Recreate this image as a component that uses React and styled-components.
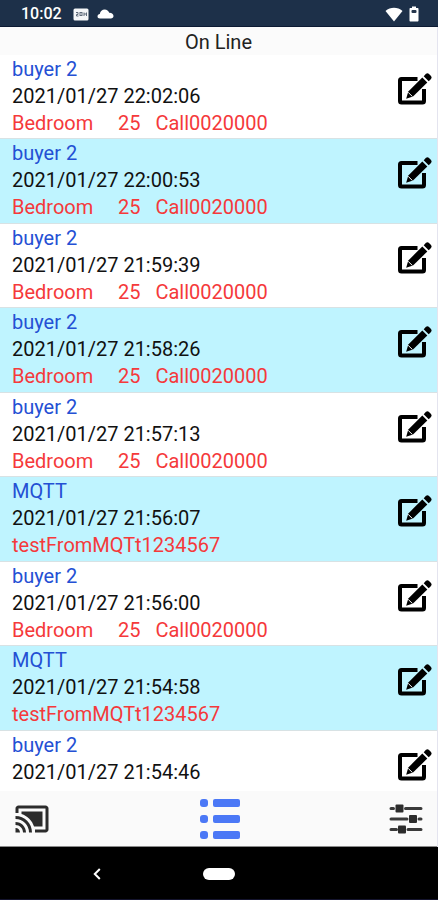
import React, { useState } from 'react'
import styled, { createGlobalStyle } from 'styled-components'
import { MdCastConnected } from 'react-icons/md'


const GlobalStyle = createGlobalStyle`
  * {
    box-sizing: border-box;
  }
  body {
    margin: 0;
    background: #fff;
    font-family: Roboto, 'Noto Sans', sans-serif;
  }
  button {
    display: flex;
    align-items: center;
    justify-content: center;
    padding: 0;
    border: none;
    background: none;
    color: inherit;
    cursor: pointer;
  }
  svg {
    display: block;
  }
`

const Screen = styled.div`
  display: flex;
  flex-direction: column;
  width: 100%;
  height: 100vh;
`

const StatusBar = styled.header`
  flex: none;
  display: flex;
  align-items: center;
  justify-content: space-between;
  height: 27px;
  padding: 2px 19px 0 21px;
  background: #1d3049;
  border-bottom: 1px solid #0c1a33;
  color: #fff;
`

const StatusGroup = styled.div`
  display: flex;
  align-items: center;
  gap: ${ props => props.$gap }px;
`

const Clock = styled.time`
  font-size: 16px;
  font-weight: 500;
  line-height: 24px;
  margin-right: 3px;
`

const Main = styled.main`
  flex: 1;
  min-height: 0;
  display: flex;
  flex-direction: column;
  border-right: 1px solid #e4e4ef;
`

const Title = styled.h1`
  flex: none;
  margin: 0;
  padding-top: 2px;
  background: #fbfbfb;
  color: #222;
  font-size: 20px;
  font-weight: 400;
  line-height: 26px;
  text-align: center;
`

const MessageList = styled.ul`
  flex: 1;
  min-height: 0;
  margin: 0;
  padding: 0;
  list-style: none;
  overflow-y: auto;
  scrollbar-width: none;
`

const Message = styled.li`
  display: flex;
  align-items: flex-start;
  justify-content: space-between;
  padding: 1px 4px 1px 12px;
  background: #fff;
  border-bottom: 1px solid #d8e2e4;
  &:nth-child(even) {
    padding-bottom: 2px;
    background: #bff4ff;
  }
  &:last-child {
    border-bottom: none;
  }
`

const Line = styled.p`
  margin: 0;
  color: ${ props => props.color };
  font-size: 20px;
  line-height: 27px;
  white-space: pre;
`

const EditButton = styled.button`
  margin-top: 16px;
`

const TabBar = styled.nav`
  flex: none;
  display: flex;
  align-items: center;
  justify-content: space-between;
  height: 56px;
  padding: 0 14px;
  background: #fafafa;
  border-bottom: 1px solid #8a8a8a;
  color: #2c2c2c;
`

const SystemBar = styled.footer`
  flex: none;
  display: grid;
  grid-template-columns: repeat(3, 1fr);
  height: 53px;
  padding: 2px 36px 0;
  background: #000;
  border-bottom: 1px solid #14142e;
  color: #fff;
`

const Pill = styled.span`
  width: 32px;
  height: 12px;
  border-radius: 6px;
  background: #fff;
`

const CardIcon = () => (
  <svg width="16" height="13" viewBox="0 0 16 13" aria-hidden="true">
    <rect x="0.5" y="0.5" width="15" height="12" rx="1.5" fill="#f4f6f8"/>
    <g fill="none" stroke="#5c6878" strokeWidth="1">
      <path d="M3 4.5h2v2H3.500v1.500h2"/>
      <rect x="7" y="4.5" width="2" height="3"/>
      <path d="M11 4.500v3.500M11 6h2.500M13.500 4.500v3.500"/>
    </g>
  </svg>
)

const CloudIcon = () => (
  <svg width="17" height="10" viewBox="0 0 17 10" aria-hidden="true">
    <path fill="#fff" d="M3 9.5C1.4 9.5 .5 8.5 .5 7.2 .5 5.9 1.5 5 2.800 4.9 3.3 2.3 5.2 .5 7.7 .5c2.200 0 3.9 1.3 4.5 3.3 2.5-.1 4.3 1.2 4.3 3.2 0 1.5-1.1 2.5-2.7 2.5z"/>
  </svg>
)

const WifiIcon = () => (
  <svg width="18" height="15" viewBox="0 0 18 15" aria-hidden="true">
    <path fill="#fff" d="M9 14.5 .5 4C5.300-.2 12.700-.2 17.5 4z"/>
  </svg>
)

const BatteryIcon = () => (
  <svg width="10" height="16" viewBox="0 0 10 16" aria-hidden="true">
    <path fill="#fff" d="M3 .5h4V2h1.500c.6 0 1 .4 1 1v11.500c0 .6-.4 1-1 1h-7c-.6 0-1-.4-1-1V3c0-.6.4-1 1-1H3z"/>
    <rect x="2.5" y="4" width="5" height="3" rx="1" fill="#26364c"/>
  </svg>
)

const EditIcon = () => (
  <svg width="36" height="34" viewBox="0 0 36 34" aria-hidden="true">
    <path d="M20.500 7H4.500Q3 7 3 8.500v20.500Q3 30.500 4.500 30.500h21Q27 30.500 27 29V17" fill="none" stroke="#000" strokeWidth="4"/>
    <path d="M25.300 5.600 30.300 10.600 16 24.400 9.200 26.800 11.300 19.400z" fill="#000"/>
    <path d="M11.200 20.400 15.400 24.500" stroke="#fff" strokeWidth="1"/>
    <path d="M26.700 4.200 29 1.800Q30.500.6 32 1.900L34 3.900Q35.300 5.400 34 6.900L31.700 9.200z" fill="#000"/>
  </svg>
)

const ListIcon = () => (
  <svg width="40" height="40" viewBox="0 0 40 40" fill="#4b78f6" aria-hidden="true">
    { [ 0, 16, 32 ].map( y => (
      <g key={ y }>
        <rect x="0" y={ y } width="8" height="8" rx="3"/>
        <rect x="13" y={ y } width="27" height="8" rx="2"/>
      </g>
    ))}
  </svg>
)

const SlidersIcon = () => (
  <svg width="34" height="36" viewBox="0 0 34 36" aria-hidden="true">
    <path d="M2 7.500h2.500M16.500 7.500h15.500M2 18h16M30 18h2M2 28.500h5.500M19 28.500h13" stroke="#3a3a3a" strokeWidth="3" strokeLinecap="round"/>
    <g fill="#2c2c2c">
      <rect x="6.500" y="3.500" width="8" height="8" rx="1"/>
      <rect x="20" y="14" width="8" height="8" rx="1"/>
      <rect x="9" y="24.500" width="8" height="8" rx="1"/>
    </g>
  </svg>
)

const BackIcon = () => (
  <svg width="8" height="12" viewBox="0 0 8 12" aria-hidden="true">
    <path d="M6.800 1 1.800 6l5 5" fill="none" stroke="#fff" strokeWidth="2"/>
  </svg>
)


const bedroom = 'Bedroom     25   Call0020000'
const mqttTest = 'testFromMQTt1234567'

const messages = [
  { sender: 'buyer 2', time: '2021/01/27 22:02:06', text: bedroom },
  { sender: 'buyer 2', time: '2021/01/27 22:00:53', text: bedroom },
  { sender: 'buyer 2', time: '2021/01/27 21:59:39', text: bedroom },
  { sender: 'buyer 2', time: '2021/01/27 21:58:26', text: bedroom },
  { sender: 'buyer 2', time: '2021/01/27 21:57:13', text: bedroom },
  { sender: 'MQTT', time: '2021/01/27 21:56:07', text: mqttTest },
  { sender: 'buyer 2', time: '2021/01/27 21:56:00', text: bedroom },
  { sender: 'MQTT', time: '2021/01/27 21:54:58', text: mqttTest },
  { sender: 'buyer 2', time: '2021/01/27 21:54:46' },
]

const App = () => {
  const [ tab, setTab ] = useState( 'list' )

  return (
    <Screen>
      <GlobalStyle/>
      <StatusBar>
        <StatusGroup $gap={ 8 }>
          <Clock>10:02</Clock>
          <CardIcon/>
          <CloudIcon/>
        </StatusGroup>
        <StatusGroup $gap={ 6 }>
          <WifiIcon/>
          <BatteryIcon/>
        </StatusGroup>
      </StatusBar>
      <Main>
        <Title>On Line</Title>
        <MessageList>
          { messages.map( m => (
            <Message key={ m.time }>
              <div>
                <Line color="#2450d4">{ m.sender }</Line>
                <Line color="#111">{ m.time }</Line>
                { m.text && <Line color="#f5393b">{ m.text }</Line> }
              </div>
              <EditButton type="button" aria-label="Edit"><EditIcon/></EditButton>
            </Message>
          ))}
        </MessageList>
        <TabBar>
          <button type="button" aria-label="Cast" aria-pressed={ tab === 'cast' } onClick={ () => setTab( 'cast' ) }>
            <MdCastConnected size={ 36 }/>
          </button>
          <button type="button" aria-label="Messages" aria-pressed={ tab === 'list' } onClick={ () => setTab( 'list' ) }>
            <ListIcon/>
          </button>
          <button type="button" aria-label="Settings" aria-pressed={ tab === 'settings' } onClick={ () => setTab( 'settings' ) }>
            <SlidersIcon/>
          </button>
        </TabBar>
      </Main>
      <SystemBar>
        <button type="button" aria-label="Back"><BackIcon/></button>
        <button type="button" aria-label="Home"><Pill/></button>
      </SystemBar>
    </Screen>
  )
}


export default App
